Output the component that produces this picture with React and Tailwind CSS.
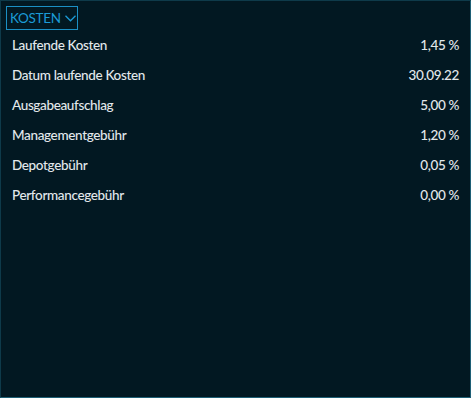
import React from "react";

const rows = [
  ["Laufende Kosten", "1,45 %"],
  ["Datum laufende Kosten", "30.09.22"],
  ["Ausgabeaufschlag", "5,00 %"],
  ["Managementgebühr", "1,20 %"],
  ["Depotgebühr", "0,05 %"],
  ["Performancegebühr", "0,00 %"],
];

export default function App() {
  return (
    <div
      className="w-[471px] h-[398px] bg-[#021822] border border-t-[#0e3a4a] border-l-[#0e3a4a] border-r-[#1e5f75] border-b-[#1e5f75] box-border flex flex-col"
      style={{ fontFamily: "Lato, 'Noto Sans', sans-serif" }}
    >
      <div className="pt-[5px] pl-[5px]">
        <button className="h-[24px] w-[72px] border border-[#1b8fc4] text-[#1b9bd6] text-[13.5px] flex items-center pl-[3px] gap-[4px] tracking-[-0.3px]">
          KOSTEN
          <svg width="11" height="7" viewBox="0 0 11 7" fill="none">
            <path d="M0.5 0.8 L5.5 5.8 L10.5 0.8" stroke="#1b9bd6" strokeWidth="1.3" />
          </svg>
        </button>
      </div>
      <div className="flex flex-col px-[11px]">
        {rows.map(([l, v]) => (
          <div key={l} className="h-[30px] flex items-center justify-between text-[13.5px] font-medium tracking-[-0.35px] text-[#e3e8ec]">
            <span>{l}</span>
            <span>{v}</span>
          </div>
        ))}
      </div>
    </div>
  );
}
